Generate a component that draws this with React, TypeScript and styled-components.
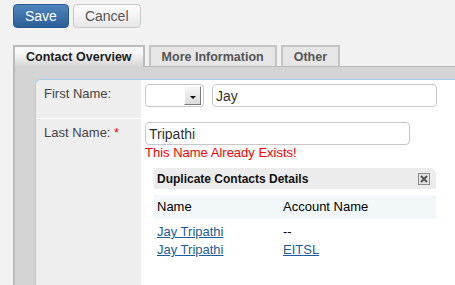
import React from 'react'
import styled, { createGlobalStyle } from 'styled-components'

const GlobalStyle = createGlobalStyle`
  html, body {
    margin: 0;
    padding: 0;
    height: 100%;
    overflow: hidden;
  }
  body {
    background: #f2f2f2;
    font-family: 'Liberation Sans', Arial, sans-serif;
  }
  #root {
    height: 100%;
  }
`

const StyledPage = styled.div`
  display: flex;
  flex-direction: column;
  height: 100%;
`

const StyledToolbar = styled.div`
  display: flex;
  gap: 4px;
  padding: 4px 0 0 13px;
`

const StyledButton = styled.button<{ $primary?: boolean }>`
  box-sizing: border-box;
  height: 24px;
  padding: 0 11px;
  border-radius: 4px;
  font-family: inherit;
  font-size: 14px;
  line-height: 22px;
  cursor: pointer;
  border: 1px solid ${(p) => (p.$primary ? '#2b5a8c' : '#c9c9c9')};
  color: ${(p) => (p.$primary ? '#fff' : '#555')};
  background: ${(p) =>
    p.$primary
      ? 'linear-gradient(#4f84bd, #2d5e97)'
      : 'linear-gradient(#fdfdfd, #e8e8e8)'};
`

const StyledTabBar = styled.div`
  display: flex;
  align-items: flex-end;
  gap: 4px;
  margin: 17px 0 0 13px;
  background: linear-gradient(to top, #b8b8b8 1px, transparent 1px);
`

const StyledTab = styled.div<{ $active?: boolean }>`
  box-sizing: border-box;
  height: 22px;
  padding: 0 11px;
  font-size: 12.5px;
  font-weight: bold;
  line-height: 20px;
  border: 2px solid ${(p) => (p.$active ? '#bbb' : '#c4c4c4')};
  border-bottom: ${(p) => (p.$active ? 'none' : '1px solid #b8b8b8')};
  color: ${(p) => (p.$active ? '#222' : '#555')};
  background: ${(p) =>
    p.$active ? 'linear-gradient(#f8f8f8 30%, #d4d4d4)' : '#e6e6e6'};
`

const StyledPanel = styled.div`
  flex: 1;
  display: flex;
  margin-left: 13px;
  padding: 12px 0 0 20px;
  border-left: 2px solid #bbb;
  background: #d4d4d4;
`

const StyledContent = styled.div`
  flex: 1;
  display: grid;
  grid-template-columns: 105px 1fr;
  grid-template-rows: auto 1fr;
  background: #fff;
  border-top: 1px solid #a7cff0;
  border-left: 1px solid #a7cff0;
  border-top-left-radius: 6px;
  overflow: hidden;
`

const StyledLabel = styled.div<{ $divider?: boolean }>`
  background: #eee;
  padding: 6px 8px 0;
  font-size: 13px;
  line-height: 15px;
  color: #444;
  border-bottom: ${(p) => (p.$divider ? '1px solid #fff' : 'none')};
`

const StyledRequired = styled.span`
  color: #e41010;
`

const StyledField = styled.div<{ $pad: string }>`
  padding: ${(p) => p.$pad};
`

const StyledInline = styled.div`
  display: flex;
  gap: 8px;
`

const StyledSelect = styled.div`
  box-sizing: border-box;
  width: 59px;
  height: 23px;
  display: flex;
  align-items: center;
  justify-content: flex-end;
  padding-right: 2px;
  border: 1px solid #c6c6c6;
  border-radius: 4px;
  background: #fff;
`

const StyledSelectArrow = styled.div`
  box-sizing: border-box;
  width: 17px;
  height: 19px;
  display: flex;
  align-items: center;
  justify-content: center;
  background: linear-gradient(#f6f6f6, #dcdcdc);
  border-top: 1px solid #fff;
  border-left: 1px solid #fff;
  border-right: 1px solid #7a7a7a;
  border-bottom: 1px solid #7a7a7a;

  &::after {
    content: '';
    margin-top: 3px;
    border-left: 3px solid transparent;
    border-right: 3px solid transparent;
    border-top: 3px solid #000;
  }
`

const StyledInput = styled.input<{ $width: number }>`
  box-sizing: border-box;
  width: ${(p) => p.$width}px;
  height: 23px;
  padding: 0 3px;
  border: 1px solid #c8c8c8;
  border-radius: 4px;
  background: #fff;
  font-family: 'Liberation Sans', Arial, sans-serif;
  font-size: 14px;
  color: #333;
  outline: none;
`

const StyledError = styled.div`
  font-size: 13px;
  line-height: 15px;
  color: #f00;
`

const StyledDuplicates = styled.div`
  width: 282px;
  margin: 8px 0 0 9px;
`

const StyledDuplicatesHeader = styled.div`
  height: 21px;
  display: flex;
  align-items: center;
  justify-content: space-between;
  padding: 0 6px 0 3px;
  background: #ececec;
  border-top-right-radius: 6px;
  font-size: 12px;
  font-weight: bold;
  color: #111;
`

const StyledCloseButton = styled.svg`
  display: block;
  cursor: pointer;
`

const StyledHeadRow = styled.div`
  display: grid;
  grid-template-columns: 126px 1fr;
  margin-top: 6px;
  padding-left: 3px;
  height: 24px;
  line-height: 24px;
  background: #f2f7fa;
  font-size: 13px;
  color: #000;
`

const StyledRows = styled.div`
  margin-top: 4px;
`

const StyledRow = styled.div`
  display: grid;
  grid-template-columns: 126px 1fr;
  padding-left: 3px;
  line-height: 18px;
  font-size: 13px;
  color: #000;
`

const StyledLink = styled.a`
  color: #1d5d9b;
  text-decoration: underline;
  cursor: pointer;
`

interface IDuplicate {
  name: string
  account?: string
}

const duplicates: IDuplicate[] = [
  { name: 'Jay Tripathi' },
  { name: 'Jay Tripathi', account: 'EITSL' },
]

const CloseIcon = () => (
  <StyledCloseButton width="12" height="12" viewBox="0 0 12 12">
    <rect x="0.5" y="0.5" width="11" height="11" fill="#e4e4e4" stroke="#8c8c8c" />
    <path d="M3 3 L9 9 M9 3 L3 9" stroke="#555" strokeWidth="2" />
  </StyledCloseButton>
)

export default function App() {
  return (
    <StyledPage>
      <GlobalStyle />
      <StyledToolbar>
        <StyledButton $primary>Save</StyledButton>
        <StyledButton>Cancel</StyledButton>
      </StyledToolbar>
      <StyledTabBar>
        <StyledTab $active>Contact Overview</StyledTab>
        <StyledTab>More Information</StyledTab>
        <StyledTab>Other</StyledTab>
      </StyledTabBar>
      <StyledPanel>
        <StyledContent>
          <StyledLabel $divider>First Name:</StyledLabel>
          <StyledField $pad="4px 0 12px 4px">
            <StyledInline>
              <StyledSelect>
                <StyledSelectArrow />
              </StyledSelect>
              <StyledInput $width={225} defaultValue="Jay" />
            </StyledInline>
          </StyledField>
          <StyledLabel>
            Last Name: <StyledRequired>*</StyledRequired>
          </StyledLabel>
          <StyledField $pad="3px 0 0 4px">
            <StyledInput $width={265} defaultValue="Tripathi" />
            <StyledError>This Name Already Exists!</StyledError>
            <StyledDuplicates>
              <StyledDuplicatesHeader>
                Duplicate Contacts Details
                <CloseIcon />
              </StyledDuplicatesHeader>
              <StyledHeadRow>
                <span>Name</span>
                <span>Account Name</span>
              </StyledHeadRow>
              <StyledRows>
                {duplicates.map((d, i) => (
                  <StyledRow key={i}>
                    <span>
                      <StyledLink>{d.name}</StyledLink>
                    </span>
                    <span>
                      {d.account ? <StyledLink>{d.account}</StyledLink> : '--'}
                    </span>
                  </StyledRow>
                ))}
              </StyledRows>
            </StyledDuplicates>
          </StyledField>
        </StyledContent>
      </StyledPanel>
    </StyledPage>
  )
}
